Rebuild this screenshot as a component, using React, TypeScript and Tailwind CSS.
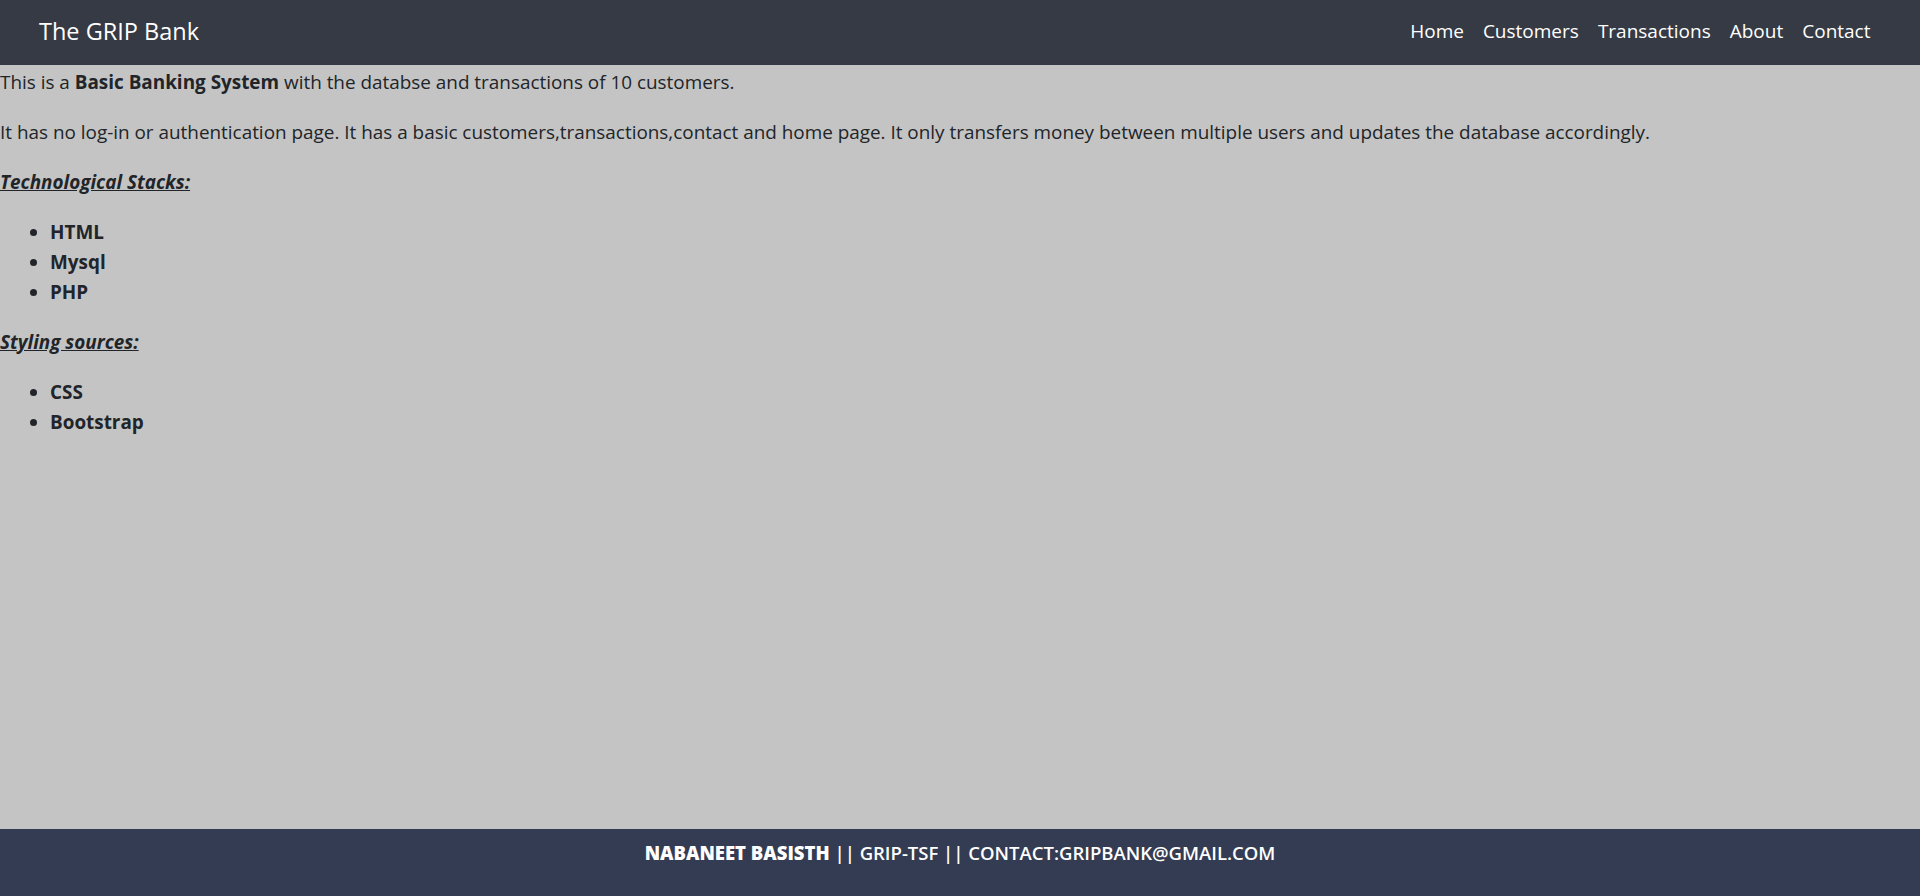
const navLinks = ["Home", "Customers", "Transactions", "About", "Contact"];

const stacks = ["HTML", "Mysql", "PHP"];
const styling = ["CSS", "Bootstrap"];

export default function App() {
  return (
    <div
      className="flex min-h-[896px] flex-col bg-[#c4c4c4] text-[#212529]"
      style={{ fontFamily: '"Open Sans", "Noto Sans", sans-serif' }}
    >
      <nav className="flex h-[65px] items-center justify-between bg-[#353a44] pb-[2px] pl-[39px] pr-[40px]">
        <a className="text-[23.5px] text-white">The GRIP Bank</a>
        <ul className="flex items-center">
          {navLinks.map((link) => (
            <li key={link}>
              <a className="px-[9.5px] text-[19px] text-white">{link}</a>
            </li>
          ))}
        </ul>
      </nav>

      <main className="flex-1 pt-[1.5px] text-[18.9px] leading-[30px]">
        <p className="mb-[20px]">
          This is a <b>Basic Banking System</b> with the databse and transactions of 10 customers.
        </p>
        <p className="mb-[20px]">
          It has no log-in or authentication page. It has a basic customers,transactions,contact and home page. It only transfers money between multiple users and updates the database accordingly.
        </p>
        <p className="mb-[20px] font-bold italic underline">Technological Stacks:</p>
        <ul className="mb-[20px] list-disc pl-[50px] font-bold">
          {stacks.map((item) => (
            <li key={item}>{item}</li>
          ))}
        </ul>
        <p className="mb-[20px] font-bold italic underline">Styling sources:</p>
        <ul className="mb-[20px] list-disc pl-[50px] font-bold">
          {styling.map((item) => (
            <li key={item}>{item}</li>
          ))}
        </ul>
      </main>

      <footer className="h-[67px] bg-[#343c53] pt-[10px] text-center text-[18.5px] font-semibold uppercase text-white">
        <span className="font-extrabold">Nabaneet Basisth</span> || GRIP-TSF || Contact:gripbank@gmail.com
      </footer>
    </div>
  );
}
